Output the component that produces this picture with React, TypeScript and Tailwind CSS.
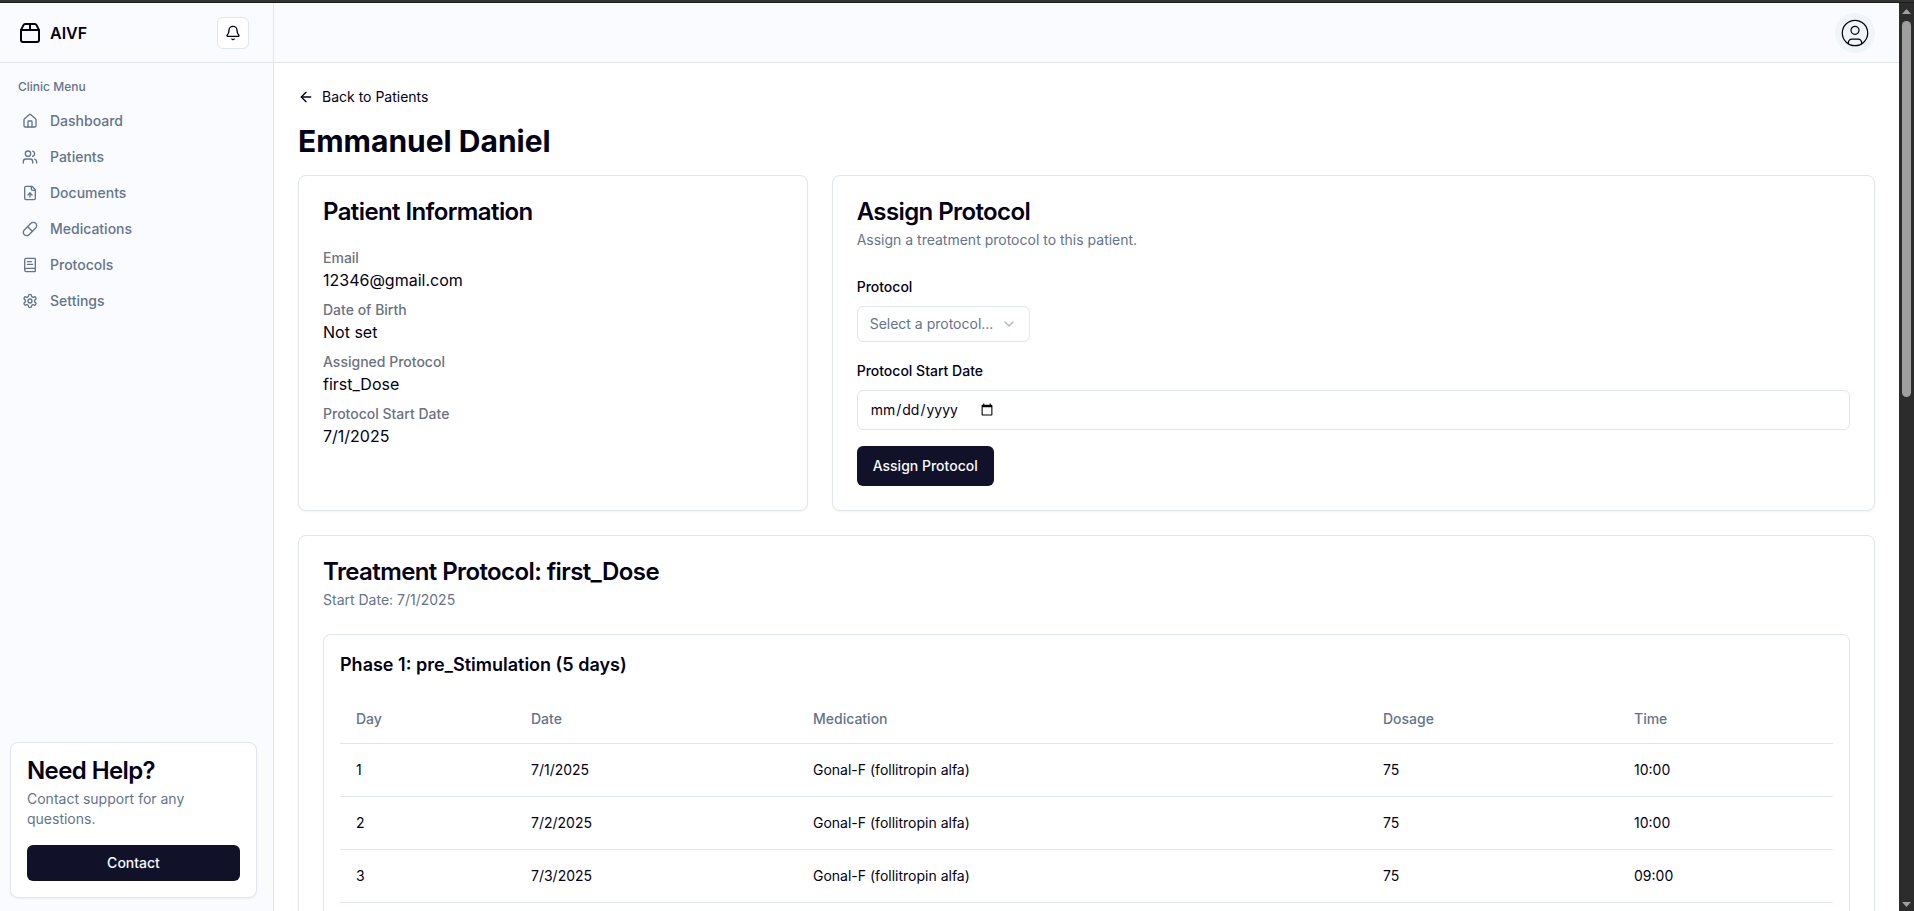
import type { ReactNode } from "react";
import {
  ArrowLeft,
  Bell,
  ChevronDown,
  Package2,
  Pill,
  Users,
} from "lucide-react";

type IconProps = { className?: string };

function Svg({ className, children }: IconProps & { children: ReactNode }) {
  return (
    <svg
      viewBox="0 0 24 24"
      fill="none"
      stroke="currentColor"
      strokeWidth="2"
      strokeLinecap="round"
      strokeLinejoin="round"
      className={className}
    >
      {children}
    </svg>
  );
}

const HomeIcon = ({ className }: IconProps) => (
  <Svg className={className}>
    <path d="M15 21v-8a1 1 0 0 0-1-1h-4a1 1 0 0 0-1 1v8" />
    <path d="M3 10a2 2 0 0 1 .709-1.528l7-5.999a2 2 0 0 1 2.582 0l7 5.999A2 2 0 0 1 21 10v9a2 2 0 0 1-2 2H5a2 2 0 0 1-2-2z" />
  </Svg>
);

const FileUpIcon = ({ className }: IconProps) => (
  <Svg className={className}>
    <path d="M15 2H6a2 2 0 0 0-2 2v16a2 2 0 0 0 2 2h12a2 2 0 0 0 2-2V7Z" />
    <path d="M14 2v4a2 2 0 0 0 2 2h4" />
    <path d="M12 12v6" />
    <path d="m15 15-3-3-3 3" />
  </Svg>
);

const BookIcon = ({ className }: IconProps) => (
  <Svg className={className}>
    <path d="M4 19.5v-15A2.5 2.5 0 0 1 6.5 2H19a1 1 0 0 1 1 1v18a1 1 0 0 1-1 1H6.5a1 1 0 0 1 0-5H20" />
    <path d="M8 11h8" />
    <path d="M8 7h6" />
  </Svg>
);

const GearIcon = ({ className }: IconProps) => (
  <Svg className={className}>
    <path d="M12.22 2h-.44a2 2 0 0 0-2 2v.18a2 2 0 0 1-1 1.73l-.43.25a2 2 0 0 1-2 0l-.15-.08a2 2 0 0 0-2.73.73l-.22.38a2 2 0 0 0 .73 2.73l.15.1a2 2 0 0 1 1 1.72v.51a2 2 0 0 1-1 1.74l-.15.09a2 2 0 0 0-.73 2.73l.22.38a2 2 0 0 0 2.73.73l.15-.08a2 2 0 0 1 2 0l.43.25a2 2 0 0 1 1 1.73V20a2 2 0 0 0 2 2h.44a2 2 0 0 0 2-2v-.18a2 2 0 0 1 1-1.73l.43-.25a2 2 0 0 1 2 0l.15.08a2 2 0 0 0 2.73-.73l.22-.39a2 2 0 0 0-.73-2.73l-.15-.08a2 2 0 0 1-1-1.74v-.5a2 2 0 0 1 1-1.74l.15-.09a2 2 0 0 0 .73-2.73l-.22-.38a2 2 0 0 0-2.73-.73l-.15.08a2 2 0 0 1-2 0l-.43-.25a2 2 0 0 1-1-1.73V4a2 2 0 0 0-2-2z" />
    <circle cx="12" cy="12" r="3" />
  </Svg>
);

const menu = [
  { label: "Dashboard", Icon: HomeIcon },
  { label: "Patients", Icon: Users },
  { label: "Documents", Icon: FileUpIcon },
  { label: "Medications", Icon: Pill },
  { label: "Protocols", Icon: BookIcon },
  { label: "Settings", Icon: GearIcon },
];

const info = [
  ["Email", "12346@gmail.com"],
  ["Date of Birth", "Not set"],
  ["Assigned Protocol", "first_Dose"],
  ["Protocol Start Date", "7/1/2025"],
];

const doses = [
  ["1", "7/1/2025", "Gonal-F (follitropin alfa)", "75", "10:00"],
  ["2", "7/2/2025", "Gonal-F (follitropin alfa)", "75", "10:00"],
  ["3", "7/3/2025", "Gonal-F (follitropin alfa)", "75", "09:00"],
];

function Card({ className = "", children }: { className?: string; children: ReactNode }) {
  return (
    <div className={`rounded-lg border border-[#e0e5f0] bg-white shadow-[0_1px_2px_0_rgb(0_0_0/0.05)] ${className}`}>
      {children}
    </div>
  );
}

function Title({ children }: { children: ReactNode }) {
  return <h3 className="text-2xl leading-none font-semibold tracking-tight">{children}</h3>;
}

function Sidebar() {
  return (
    <aside className="flex w-[274px] shrink-0 flex-col border-r border-[#e0e5f0] bg-[#fafbfe]">
      <div className="flex h-[60px] shrink-0 items-center justify-between border-b border-[#e0e5f0] pr-6 pl-[18px]">
        <div className="flex items-center gap-2 font-semibold">
          <Package2 className="size-6" />
          <span>AIVF</span>
        </div>
        <button className="flex size-8 items-center justify-center rounded-md border border-[#e0e5f0] bg-white">
          <Bell className="size-4" />
        </button>
      </div>
      <nav className="flex flex-1 flex-col pt-4 text-sm font-medium text-[#64748b]">
        <div className="mb-2 pl-[18px] text-xs leading-4">Clinic Menu</div>
        {menu.map(({ label, Icon }) => (
          <a key={label} className="flex h-9 items-center gap-3 pl-[22px]">
            <Icon className="size-4" />
            {label}
          </a>
        ))}
      </nav>
      <div className="pr-4 pb-[13px] pl-2.5">
        <Card className="p-4">
          <Title>Need Help?</Title>
          <p className="mt-1.5 text-sm text-[#64748b]">Contact support for any questions.</p>
          <button className="mt-4 h-9 w-full rounded-md bg-[#11122a] text-sm font-medium text-[#f8fafc]">
            Contact
          </button>
        </Card>
      </div>
    </aside>
  );
}

function Header() {
  return (
    <header className="flex h-[60px] shrink-0 items-center justify-end border-b border-[#e0e5f0] bg-[#fafbfe] pr-6">
      <button className="flex size-10 items-center justify-center rounded-full bg-[#f0f5fa] text-black">
        <svg viewBox="0 0 28 28" className="size-7" fill="none" stroke="currentColor" strokeWidth="1.2">
          <circle cx="14" cy="14" r="12.7" />
          <circle cx="14" cy="11.3" r="4" />
          <path d="M7.4 24.7V23.5a3.4 3.4 0 0 1 3.4-3.4h6.4a3.4 3.4 0 0 1 3.4 3.4v1.2" />
        </svg>
      </button>
    </header>
  );
}

function PatientCard() {
  return (
    <Card className="p-6">
      <Title>Patient Information</Title>
      <div className="mt-6 space-y-2">
        {info.map(([label, value]) => (
          <div key={label}>
            <p className="text-sm font-medium text-[#6b7280]">{label}</p>
            <p>{value}</p>
          </div>
        ))}
      </div>
    </Card>
  );
}

function AssignCard() {
  return (
    <Card className="col-span-2 p-6">
      <Title>Assign Protocol</Title>
      <p className="mt-1.5 text-sm text-[#64748b]">Assign a treatment protocol to this patient.</p>
      <div className="mt-6 space-y-4">
        <div>
          <div className="mb-2">
            <label className="text-sm leading-none font-medium">Protocol</label>
          </div>
          <button className="flex h-9 w-[173px] items-center rounded-md border border-[#e0e5f0] px-3 text-sm whitespace-nowrap text-[#64748b]">
            Select a protocol...
            <ChevronDown className="ml-2 size-4 shrink-0 opacity-50" />
          </button>
        </div>
        <div>
          <div className="mb-2">
            <label className="text-sm leading-none font-medium">Protocol Start Date</label>
          </div>
          <input
            type="date"
            className="flex h-10 w-full rounded-md border border-[#e0e5f0] bg-white px-3 py-2 text-sm"
          />
        </div>
        <button className="block h-10 rounded-md bg-[#11122a] px-4 text-sm font-medium text-[#f8fafc]">
          Assign Protocol
        </button>
      </div>
    </Card>
  );
}

function TreatmentCard() {
  return (
    <Card className="mt-6 p-6">
      <Title>Treatment Protocol: first_Dose</Title>
      <p className="mt-1.5 text-sm text-[#64748b]">Start Date: 7/1/2025</p>
      <div className="mt-6 rounded-lg border border-[#e0e5f0] px-4 pt-4 pb-16">
        <h4 className="mb-4 text-lg font-semibold">Phase 1: pre_Stimulation (5 days)</h4>
        <table className="w-full table-fixed text-sm">
          <colgroup>
            <col className="w-[175px]" />
            <col className="w-[282px]" />
            <col className="w-[570px]" />
            <col className="w-[251px]" />
            <col />
          </colgroup>
          <thead>
            <tr className="border-b border-[#e0e5f0]">
              {["Day", "Date", "Medication", "Dosage", "Time"].map((h) => (
                <th key={h} className="h-12 px-4 text-left align-middle font-medium text-[#64748b]">
                  {h}
                </th>
              ))}
            </tr>
          </thead>
          <tbody>
            {doses.map((row) => (
              <tr key={row[0]} className="border-b border-[#e0e5f0]">
                {row.map((cell, i) => (
                  <td key={i} className="p-4 align-middle">
                    {cell}
                  </td>
                ))}
              </tr>
            ))}
          </tbody>
        </table>
      </div>
    </Card>
  );
}

function Scrollbar() {
  return (
    <div className="flex w-[15px] shrink-0 flex-col items-center bg-[#2c2c2c] pt-1.5 pb-1">
      <svg viewBox="0 0 9 5" className="h-[5px] w-[9px] shrink-0" fill="#9f9f9f">
        <path d="M0 5 4.5 0 9 5z" />
      </svg>
      <div className="mt-[7px] h-[376px] w-[9px] shrink-0 rounded-full bg-[#9f9f9f]" />
      <svg viewBox="0 0 9 5" className="mt-auto h-[5px] w-[9px] shrink-0" fill="#9f9f9f">
        <path d="M0 0 4.5 5 9 0z" />
      </svg>
    </div>
  );
}

export default function App() {
  return (
    <div className="flex h-[911px] flex-col overflow-hidden bg-white font-['Inter',sans-serif] text-base text-[#020014]">
      <div className="h-[3px] shrink-0 border-b border-[#1c1c1c] bg-[#333333]" />
      <div className="flex min-h-0 flex-1">
        <Sidebar />
        <div className="flex min-w-0 flex-1 flex-col">
          <Header />
          <main className="min-h-0 flex-1 overflow-hidden p-6">
            <a className="flex items-center gap-2 text-sm">
              <ArrowLeft className="size-4" />
              Back to Patients
            </a>
            <h1 className="my-4 text-3xl font-bold">Emmanuel Daniel</h1>
            <div className="grid grid-cols-3 gap-6">
              <PatientCard />
              <AssignCard />
            </div>
            <TreatmentCard />
          </main>
        </div>
        <Scrollbar />
      </div>
    </div>
  );
}
